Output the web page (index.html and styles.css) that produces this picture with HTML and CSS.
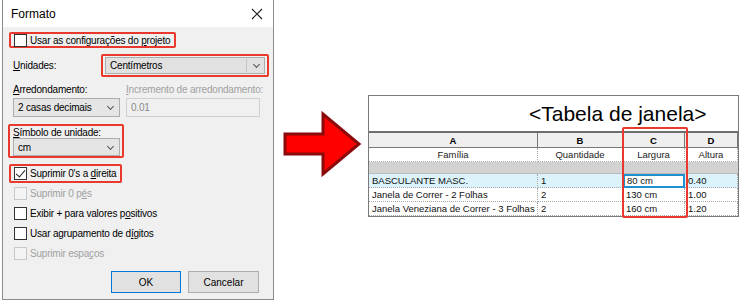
FILE: index.html
```html
<!DOCTYPE html>
<html lang="pt-BR">
<head>
    <meta charset="UTF-8">
    <title>Formato</title>
    <link rel="stylesheet" href="styles.css">
</head>
<body>
    <div class="page">
        <div class="dialog">
            <div class="titlebar">
                <span>Formato</span>
                <svg class="close" width="12" height="12" viewBox="0 0 12 12"><path d="M1 1L11 11M11 1L1 11" stroke="#222" stroke-width="1.2"/></svg>
            </div>
            <div class="content">
                <div class="hl hl-check">
                    <span class="box"></span><span>Usar as configurações do <u>p</u>rojeto</span>
                </div>

                <div class="row units">
                    <span class="label"><u>U</u>nidades:</span>
                    <div class="hl hl-select">
                        <div class="select wide">Centímetros<span class="chev"></span></div>
                    </div>
                </div>

                <div class="row labels">
                    <span class="label col1"><u>A</u>rredondamento:</span>
                    <span class="label muted"><u>I</u>ncremento de arredondamento:</span>
                </div>
                <div class="row fields">
                    <div class="select small">2 casas decimais<span class="chev"></span></div>
                    <div class="input">0.01</div>
                </div>

                <div class="hl hl-symbol">
                    <span class="label"><u>S</u>ímbolo de unidade:</span>
                    <div class="select small">cm<span class="chev"></span></div>
                </div>

                <div class="hl hl-check2">
                    <span class="box checked"></span><span>Suprimir 0's a <u>d</u>ireita</span>
                </div>

                <div class="opt first muted"><span class="box off"></span><span>Suprimir 0 p<u>é</u>s</span></div>
                <div class="opt"><span class="box"></span><span>Exibir + para valores p<u>o</u>sitivos</span></div>
                <div class="opt"><span class="box"></span><span>Usar agrupamento de d<u>í</u>gitos</span></div>
                <div class="opt muted"><span class="box off"></span><span>Suprimir espa<u>ç</u>os</span></div>

                <div class="buttons">
                    <button class="btn default">OK</button>
                    <button class="btn">Cancelar</button>
                </div>
            </div>
        </div>

        <svg class="arrow" width="80" height="66" viewBox="0 0 80 66">
            <polygon points="2,23 40,23 40,3 76,33 40,63 40,43 2,43" fill="#ff0000" stroke="#8b0a0a" stroke-width="3" stroke-linejoin="miter"/>
        </svg>

        <div class="sheet-wrap">
            <div class="sheet">
                <div class="title">&lt;Tabela de janela&gt;</div>
                <div class="grid">
                    <div class="hd">A</div><div class="hd">B</div><div class="hd">C</div><div class="hd">D</div>
                    <div class="nm">Família</div><div class="nm">Quantidade</div><div class="nm">Largura</div><div class="nm">Altura</div>
                    <div class="gr"></div><div class="gr"></div><div class="gr"></div><div class="gr"></div>
                    <div class="cell sel">BASCULANTE MASC.</div><div class="cell sel">1</div><div class="cell active">80 cm</div><div class="cell sel">0.40</div>
                    <div class="cell">Janela de Correr - 2 Folhas</div><div class="cell">2</div><div class="cell">130 cm</div><div class="cell">1.00</div>
                    <div class="cell">Janela Veneziana de Correr - 3 Folhas</div><div class="cell">2</div><div class="cell">160 cm</div><div class="cell">1.20</div>
                </div>
            </div>
            <div class="col-mark"></div>
        </div>
    </div>
</body>
</html>
```

FILE: styles.css
```css
body {
    margin: 0;
    background: #fff;
    font-family: "Liberation Sans", Arial, sans-serif;
}
.page {
    display: flex;
    align-items: flex-start;
    width: 750px;
    height: 301px;
    overflow: hidden;
}
u {
    text-decoration: underline;
    text-underline-offset: 1px;
}

/* dialog */
.dialog {
    width: 270px;
    height: 299px;
    margin-left: 2px;
    border: 1px solid #8c8c8c;
    border-top: none;
    display: flex;
    flex-direction: column;
    font-size: 10px;
    letter-spacing: -0.2px;
    color: #000;
    white-space: nowrap;
}
.titlebar {
    height: 27px;
    flex: none;
    background: #fff;
    display: flex;
    align-items: center;
    justify-content: space-between;
    padding: 0 10px 0 8px;
    font-size: 12px;
    letter-spacing: 0;
}
.content {
    flex: 1;
    background: #f0f0f0;
    padding-top: 5px;
    display: flex;
    flex-direction: column;
    align-items: flex-start;
}
.hl {
    border: 2px solid #e8392c;
    border-radius: 2px;
}
.hl-check {
    margin-left: 6px;
    height: 12px;
    padding: 0 4px 0 3px;
    display: flex;
    align-items: center;
}
.box {
    width: 11px;
    height: 11px;
    border: 1px solid #333;
    background: #fff;
    margin-right: 3px;
    position: relative;
    flex: none;
}
.box.off {
    border-color: #c8c8c8;
    background: #f4f4f4;
}
.box.checked::after {
    content: "";
    position: absolute;
    left: 3px;
    top: 0;
    width: 4px;
    height: 8px;
    border-right: 1.3px solid #222;
    border-bottom: 1.3px solid #222;
    transform: rotate(40deg);
}
.row {
    display: flex;
    align-items: center;
}
.units {
    width: 100%;
    margin-top: 6px;
    justify-content: space-between;
}
.units .label {
    margin-left: 10px;
}
.hl-select {
    margin-right: 4px;
    padding: 1px 2px;
}
.select {
    height: 15px;
    background: #e5e5e5;
    border: 1px solid #adadad;
    display: flex;
    align-items: center;
    padding: 0 4px;
    position: relative;
}
.select.wide {
    width: 150px;
    background: #e1e1e1;
}
.select.small {
    width: 97px;
    height: 17px;
}
.chev {
    position: absolute;
    right: 6px;
    top: 5px;
    width: 4px;
    height: 4px;
    border-right: 1px solid #555;
    border-bottom: 1px solid #555;
    transform: rotate(45deg);
}
.wide .chev {
    right: 5px;
    top: 4px;
}
.select.wide::before {
    content: "";
    position: absolute;
    right: 17px;
    top: 1px;
    bottom: 1px;
    border-left: 1px solid #c6c6c6;
}
.labels {
    margin-top: 6px;
    margin-left: 10px;
    height: 12px;
}
.col1 {
    width: 113px;
}
.muted {
    color: #a0a0a0;
}
.fields {
    margin-top: 3px;
    margin-left: 10px;
    gap: 6px;
}
.input {
    width: 124px;
    height: 17px;
    border: 1px solid #d0d0d0;
    background: #f0f0f0;
    color: #8a8a8a;
    padding: 0 4px;
    display: flex;
    align-items: center;
}
.hl-symbol {
    margin-top: 7px;
    margin-left: 5px;
    height: 29px;
    padding: 1px 2px 0 3px;
    display: flex;
    flex-direction: column;
    justify-content: space-between;
}
.hl-check2 {
    margin-top: 6px;
    margin-left: 6px;
    height: 15px;
    padding: 0 4px 0 3px;
    display: flex;
    align-items: center;
}
.opt {
    margin-top: 6px;
    margin-left: 11px;
    height: 14px;
    display: flex;
    align-items: center;
}
.opt.first {
    margin-top: 3px;
}
.buttons {
    margin-top: 11px;
    margin-left: 108px;
    display: flex;
    gap: 7px;
}
.btn {
    width: 71px;
    height: 22px;
    background: #e1e1e1;
    border: 1px solid #adadad;
    font-family: "Liberation Sans", Arial, sans-serif;
    font-size: 10px;
    padding: 0;
}
.btn.default {
    border: 1px solid #0078d7;
    width: 70px;
}

/* arrow */
.arrow {
    margin-top: 111px;
    margin-left: 9px;
}

/* schedule */
.sheet-wrap {
    position: relative;
    margin-top: 95px;
    margin-left: 5px;
}
.sheet {
    width: 369px;
    border: 1px solid #7a7a7a;
    font-size: 9.5px;
    background: #fff;
}
.title {
    height: 34px;
    border-bottom: 2px solid #6d6d6d;
    font-size: 21px;
    display: flex;
    align-items: center;
    padding-left: 160px;
    padding-top: 1px;
}
.grid {
    display: grid;
    grid-template-columns: 169px 85px 62px 53px;
}
.grid > div {
    height: 13px;
    line-height: 13px;
}
.hd {
    background: #efefef;
    border-right: 1px solid #777;
    border-bottom: 1px solid #777;
    font-weight: bold;
    text-align: center;
    padding-top: 1px;
}
.nm {
    text-align: center;
    border-right: 1px dotted #aaa;
    border-bottom: 1px dotted #aaa;
    color: #222;
}
.grid > .gr {
    background: #d2d2d2;
    height: 11px;
    border-bottom: 1px solid #bbb;
}
.cell {
    padding-left: 3px;
    border-right: 1px dotted #aaa;
    border-bottom: 1px dotted #aaa;
    color: #111;
}
.cell.sel {
    background: #dcf3fb;
}
.cell.active {
    background: #fff;
    outline: 2px solid #1e90d0;
    outline-offset: -2px;
    padding-left: 4px;
}
.col-mark {
    position: absolute;
    left: 254px;
    top: 32px;
    width: 62px;
    height: 87px;
    border: 2px solid #e8392c;
    border-radius: 2px;
}
```
